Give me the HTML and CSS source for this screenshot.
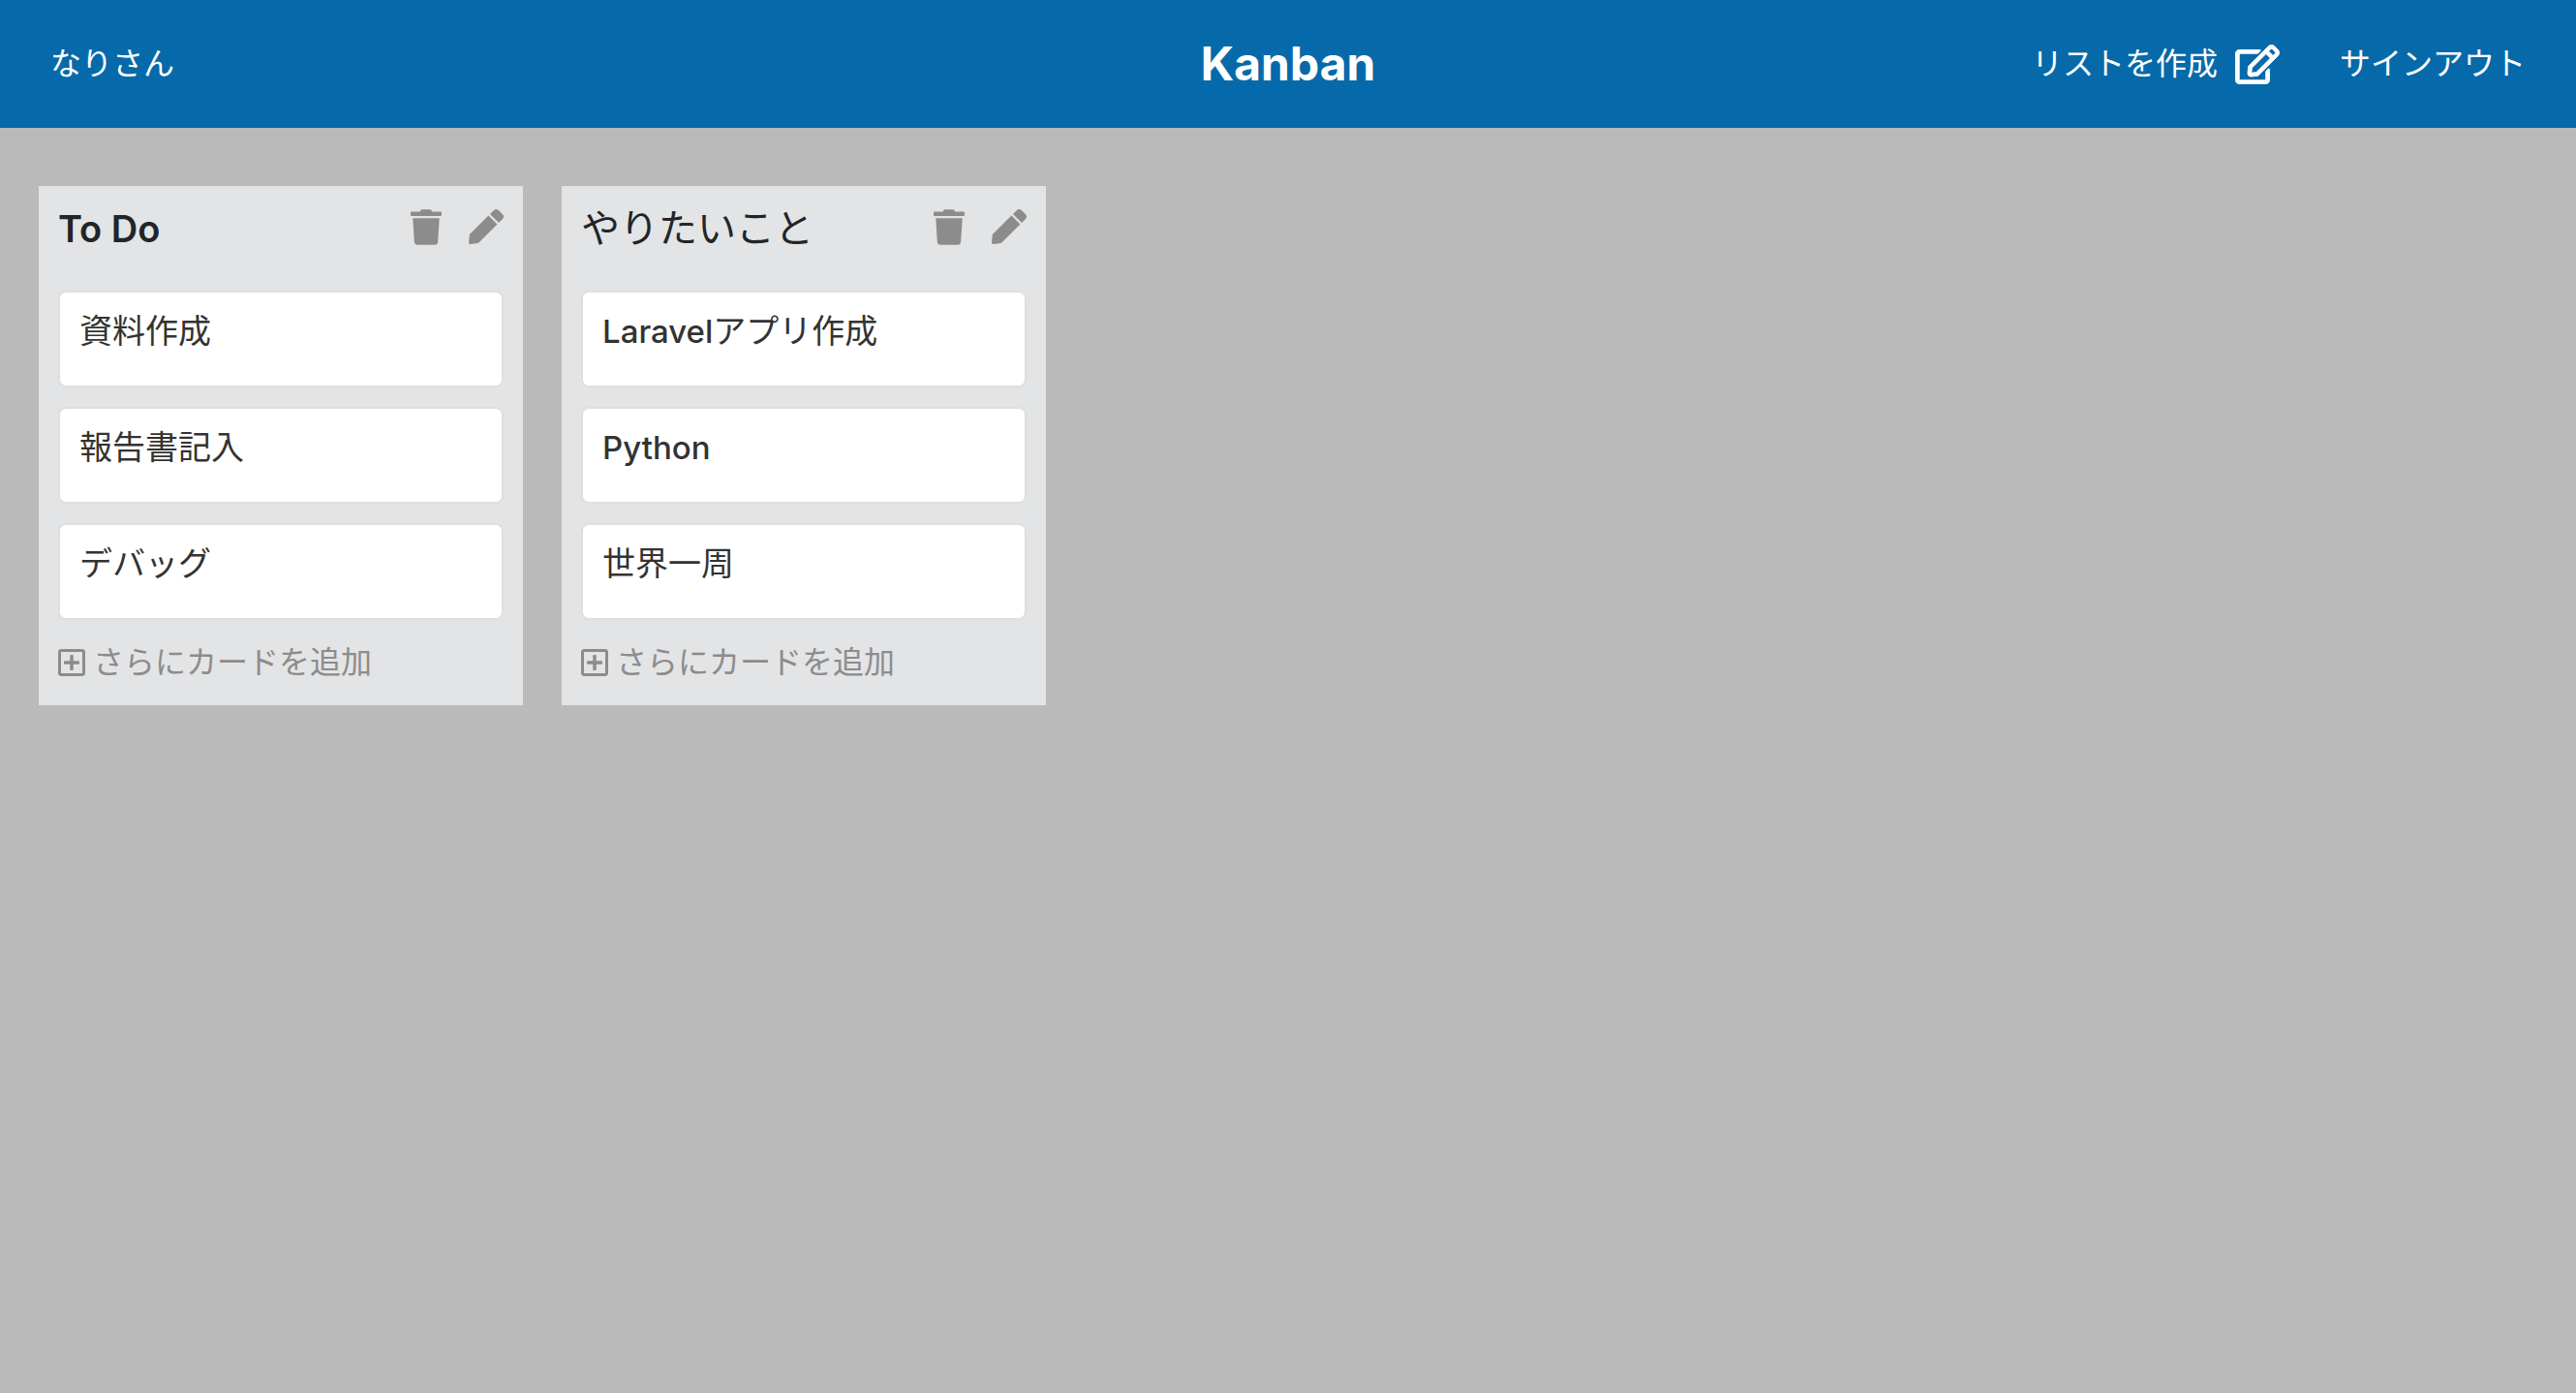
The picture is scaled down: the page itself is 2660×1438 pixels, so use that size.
FILE: index.html
```html
<!DOCTYPE html>
<html lang="ja">
<head>
<meta charset="utf-8">
<meta name="viewport" content="width=device-width, initial-scale=1">
<title>Kanban</title>
<link rel="stylesheet" href="styles.css">
</head>
<body>
<svg class="sprite" aria-hidden="true">
  <symbol id="icon-edit" viewBox="-6 -6 588 524"><path stroke="currentColor" stroke-width="12" d="M402.3 344.9l32-32c5-5 13.7-1.5 13.7 5.7V464c0 26.5-21.5 48-48 48H48c-26.5 0-48-21.5-48-48V112c0-26.5 21.5-48 48-48h273.5c7.1 0 10.7 8.6 5.7 13.7l-32 32c-1.5 1.5-3.5 2.3-5.7 2.3H48v352h352V350.5c0-2.1.8-4.1 2.3-5.6zm156.6-201.8L296.3 405.7l-90.4 10c-26.2 2.9-48.5-19.2-45.6-45.6l10-90.4L432.9 17.1c22.9-22.9 59.9-22.9 82.7 0l43.2 43.2c22.9 22.9 22.9 60 .1 82.8zM460.1 174L402 115.9 216.2 301.8l-7.3 65.3 65.3-7.3L460.1 174zm64.8-79.7l-43.2-43.2c-4.1-4.1-10.8-4.1-14.8 0L436 82l58.1 58.1 30.9-30.9c4-4.2 4-10.8-.1-14.9z"/></symbol>
  <symbol id="icon-trash" viewBox="0 0 448 512"><path d="M432 32H312l-9.4-18.7A24 24 0 0 0 281.1 0H166.8a23.72 23.72 0 0 0-21.4 13.3L136 32H16A16 16 0 0 0 0 48v32a16 16 0 0 0 16 16h416a16 16 0 0 0 16-16V48a16 16 0 0 0-16-16zM53.2 467a48 48 0 0 0 47.9 45h245.8a48 48 0 0 0 47.9-45L416 128H32z"/></symbol>
  <symbol id="icon-pen" viewBox="0 0 512 512"><path d="M290.74 93.24l128.02 128.02-277.99 277.99-114.14 12.6C11.35 513.54-1.56 500.62.14 485.34l12.7-114.22 277.9-277.88zm207.2-19.06l-60.11-60.11c-18.75-18.75-49.16-18.75-67.91 0l-56.55 56.55 128.02 128.02 56.55-56.55c18.75-18.76 18.75-49.16 0-67.91z"/></symbol>
  <symbol id="icon-plus" viewBox="0 0 448 512"><path d="M352 240v32c0 6.6-5.4 12-12 12h-88v88c0 6.6-5.4 12-12 12h-32c-6.6 0-12-5.4-12-12v-88h-88c-6.6 0-12-5.4-12-12v-32c0-6.6 5.4-12 12-12h88v-88c0-6.6 5.4-12 12-12h32c6.6 0 12 5.4 12 12v88h88c6.6 0 12 5.4 12 12zm96-160v352c0 26.5-21.5 48-48 48H48c-26.5 0-48-21.5-48-48V80c0-26.5 21.5-48 48-48h352c26.5 0 48 21.5 48 48zm-48 346V86c0-3.3-2.7-6-6-6H54c-3.3 0-6 2.7-6 6v340c0 3.3 2.7 6 6 6h340c3.3 0 6-2.7 6-6z"/></symbol>
</svg>

<header class="header">
  <a class="header-link" href="#user">なりさん</a>
  <h1 class="brand">Kanban</h1>
  <nav class="header-nav">
    <a class="header-link" href="#new-list">リストを作成 <svg class="icon icon-edit" aria-hidden="true"><use href="#icon-edit"/></svg></a>
    <a class="header-link" href="#sign-out">サインアウト</a>
  </nav>
</header>

<main class="board">
  <section class="list">
    <div class="list-head">
      <h2 class="list-title list-title-latin">To Do</h2>
      <button class="icon-button" type="button" aria-label="リストを削除"><svg class="icon icon-trash"><use href="#icon-trash"/></svg></button>
      <a class="icon-button" href="#edit-list" aria-label="リストを編集"><svg class="icon icon-pen"><use href="#icon-pen"/></svg></a>
    </div>
    <div class="cards">
      <a class="card" href="#card-1">資料作成</a>
      <a class="card" href="#card-2">報告書記入</a>
      <a class="card" href="#card-3">デバッグ</a>
    </div>
    <a class="add-card" href="#new-card"><svg class="icon icon-plus" aria-hidden="true"><use href="#icon-plus"/></svg>さらにカードを追加</a>
  </section>

  <section class="list">
    <div class="list-head">
      <h2 class="list-title">やりたいこと</h2>
      <button class="icon-button" type="button" aria-label="リストを削除"><svg class="icon icon-trash"><use href="#icon-trash"/></svg></button>
      <a class="icon-button" href="#edit-list" aria-label="リストを編集"><svg class="icon icon-pen"><use href="#icon-pen"/></svg></a>
    </div>
    <div class="cards">
      <a class="card" href="#card-4"><span class="latin">Laravel</span>アプリ作成</a>
      <a class="card" href="#card-5"><span class="latin">Python</span></a>
      <a class="card" href="#card-6">世界一周</a>
    </div>
    <a class="add-card" href="#new-card"><svg class="icon icon-plus" aria-hidden="true"><use href="#icon-plus"/></svg>さらにカードを追加</a>
  </section>
</main>
</body>
</html>
```
FILE: styles.css
```css
* {
  box-sizing: border-box;
}

body {
  margin: 0;
  min-height: 100vh;
  background: #bababa;
  color: #212529;
  font-family: Inter, "Noto Sans CJK JP", sans-serif;
  font-size: 32px;
  line-height: 48px;
}

a {
  color: inherit;
  text-decoration: none;
}

.sprite {
  display: none;
}

.icon {
  display: block;
  flex: none;
  fill: currentColor;
}

.icon-edit {
  width: 46px;
  height: 41px;
}

.icon-trash {
  width: 32px;
  height: 37px;
}

.icon-pen {
  width: 36px;
  height: 36px;
}

.icon-plus {
  width: 28px;
  height: 32px;
}

/* Header */

.header {
  display: grid;
  grid-template-columns: 1fr auto 1fr;
  align-items: center;
  min-height: 132px;
  padding: 0 52px;
  background: #066aaa;
  color: #fff;
}

.header-link {
  display: flex;
  align-items: center;
  gap: 18px;
}

.brand {
  margin: 0;
  font-size: 48px;
  font-weight: 700;
}

.header-nav {
  display: flex;
  align-items: center;
  justify-content: flex-end;
  gap: 62px;
}

/* Board */

.board {
  display: flex;
  align-items: flex-start;
  gap: 40px;
  padding: 60px 40px;
}

.list {
  flex: 0 0 500px;
  padding: 20px;
  background: #e3e4e5;
}

.list-head {
  display: flex;
  align-items: flex-start;
  gap: 28px;
  margin-bottom: 40px;
}

.list-title {
  flex: 1;
  margin: 0;
  font-size: 40px;
  font-weight: 400;
}

.list-title-latin {
  font-size: 38px;
  font-weight: 600;
}

.icon-button {
  padding: 4px 0;
  border: 0;
  background: none;
  color: #8c8c8c;
  cursor: pointer;
}

.cards {
  display: grid;
  gap: 20px;
}

.card {
  min-height: 100px;
  padding: 16px 20px;
  border: 2px solid #dfdfdf;
  border-radius: 8px;
  background: #fff;
  color: #333;
  font-size: 34px;
}

.latin {
  font-size: 33px;
  font-weight: 500;
}

.add-card {
  display: flex;
  align-items: center;
  gap: 8px;
  margin-top: 20px;
  color: #8c8c8c;
}
```
